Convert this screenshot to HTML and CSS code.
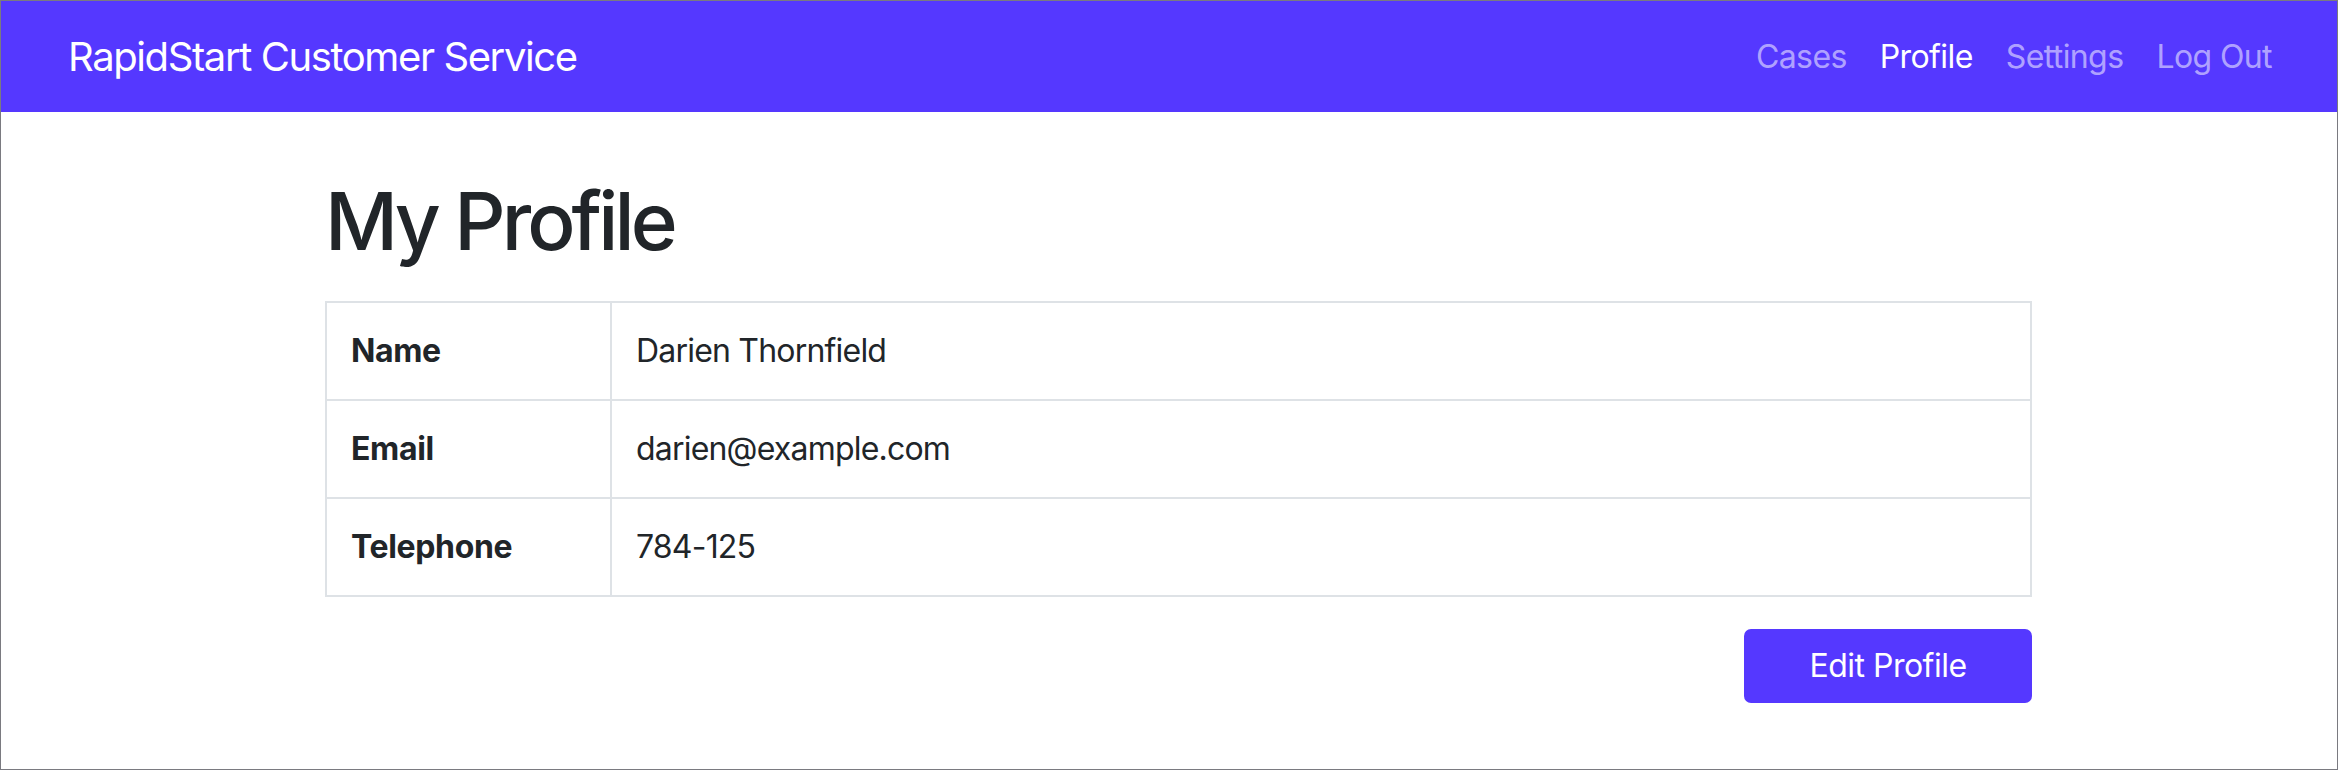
FILE: index.html
```html
<!DOCTYPE html>
<html lang="en">
<head>
<meta charset="utf-8">
<title>My Profile - RapidStart Customer Service</title>
<link rel="stylesheet" href="styles.css">
</head>
<body>
<div class="frame">
  <nav class="navbar">
    <a class="brand" href="#">RapidStart Customer Service</a>
    <ul class="nav-links">
      <li><a class="nav-link" href="#">Cases</a></li>
      <li><a class="nav-link active" href="#">Profile</a></li>
      <li><a class="nav-link" href="#">Settings</a></li>
      <li><a class="nav-link" href="#">Log Out</a></li>
    </ul>
  </nav>
  <main class="content">
    <h1 class="page-title">My Profile</h1>
    <table class="profile-table">
      <tbody>
        <tr><th>Name</th><td>Darien Thornfield</td></tr>
        <tr><th>Email</th><td>darien@example.com</td></tr>
        <tr><th>Telephone</th><td>784-125</td></tr>
      </tbody>
    </table>
    <div class="actions">
      <a class="btn-primary" href="#">Edit Profile</a>
    </div>
  </main>
</div>
</body>
</html>
```

FILE: styles.css
```css
* { box-sizing: border-box; }
html, body {
  margin: 0;
  padding: 0;
  background: #ffffff;
}
body {
  font-family: Inter, "Noto Sans", "Liberation Sans", sans-serif;
  color: #212529;
}
.frame {
  width: 2338px;
  height: 770px;
  border: 1px solid #7a7a80;
  overflow: hidden;
}
.navbar {
  height: 111px;
  background: #5538ff;
  display: flex;
  align-items: center;
  justify-content: space-between;
  padding: 0 65px 0 67px;
}
.brand {
  color: #ffffff;
  font-size: 40px;
  line-height: 60px;
  letter-spacing: -1.4px;
  text-decoration: none;
}
.nav-links {
  list-style: none;
  margin: 0;
  padding: 0;
  display: flex;
  gap: 33px;
}
.nav-link {
  color: rgba(255, 255, 255, 0.55);
  font-size: 32px;
  line-height: 48px;
  letter-spacing: -0.6px;
  text-decoration: none;
}
.nav-link.active {
  color: #ffffff;
}
.content {
  padding: 61px 305px 0 324px;
}
.page-title {
  margin: 0 0 32px 0;
  font-size: 80px;
  line-height: 96px;
  font-weight: 500;
  letter-spacing: -3.9px;
  color: #212529;
}
.profile-table {
  width: 100%;
  border-collapse: collapse;
  border: 2px solid #dee2e6;
  font-size: 32px;
  line-height: 48px;
}
.profile-table th,
.profile-table td {
  border: 2px solid #dee2e6;
  padding: 24px 24px;
  text-align: left;
  vertical-align: top;
  color: #212529;
}
.profile-table th {
  width: 285px;
  font-weight: 700;
  letter-spacing: -0.35px;
}
.profile-table td {
  font-weight: 400;
  letter-spacing: -0.8px;
}
.actions {
  display: flex;
  justify-content: flex-end;
  margin-top: 32px;
}
.btn-primary {
  display: inline-block;
  background: #5538ff;
  color: #ffffff;
  font-size: 32px;
  line-height: 48px;
  letter-spacing: -0.5px;
  padding: 13px 0;
  width: 288px;
  text-align: center;
  border-radius: 7px;
  text-decoration: none;
}
```
